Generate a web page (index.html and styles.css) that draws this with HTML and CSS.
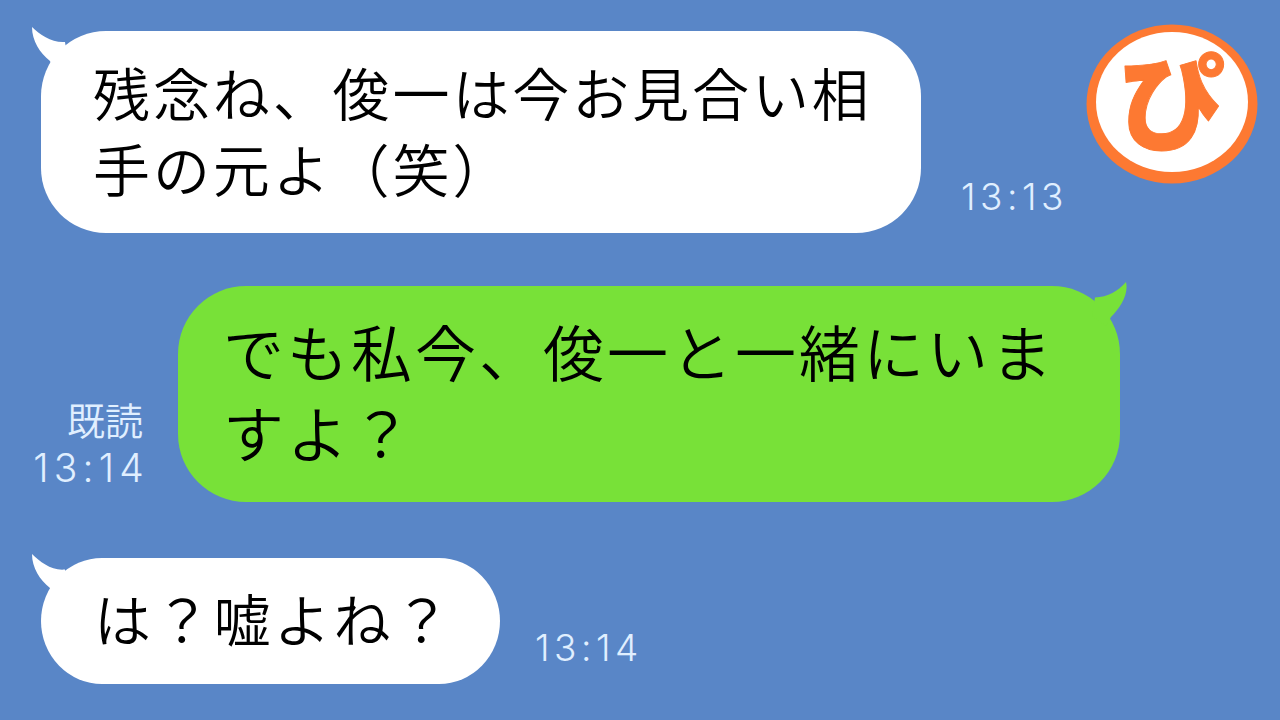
FILE: index.html
```
<!DOCTYPE html>
<html lang="ja">
<head>
    <meta charset="UTF-8">
    <meta name="viewport" content="width=device-width, initial-scale=1.0">
    <title>トーク</title>
    <link rel="stylesheet" href="styles.css">
</head>
<body>
    <div class="chat">
        <div class="message received first">
            <div class="bubble">
                <svg class="tail" viewBox="0 0 36 46"><path d="M0 0 C8 8 20 16 33 15 L36 34 L22 44 L18 34 C8 26 0 14 0 0 Z"/></svg>
                <p>残念ね、俊一は今お見合い相<br>手の元よ（笑）</p>
            </div>
            <span class="time">13:13</span>
        </div>

        <div class="message sent">
            <div class="status">
                <span class="read">既読</span>
                <span class="time">13:14</span>
            </div>
            <div class="bubble">
                <svg class="tail" viewBox="0 0 36 46"><path d="M34 0 C26 9 16 15 3 15.500 L0 34 L14 44 L19 35 C28 26 37 12 34 0 Z"/></svg>
                <p>でも私今、俊一と一緒にいま<br>すよ？</p>
            </div>
        </div>

        <div class="message received last">
            <div class="bubble">
                <svg class="tail" viewBox="0 0 36 46"><path d="M0 0 C8 8 20 17 33 15.500 L36 34 L22 44 L18 34 C8 26 0 14 0 0 Z"/></svg>
                <p>は？嘘よね？</p>
            </div>
            <span class="time">13:14</span>
        </div>
    </div>

    <svg class="logo" viewBox="0 0 172 160">
        <ellipse class="logo-ring" cx="86" cy="80" rx="85.500" ry="79.500"/>
        <ellipse class="logo-face" cx="86" cy="78" rx="76" ry="70"/>
        <text class="logo-text" x="86" y="117" text-anchor="middle">ぴ</text>
    </svg>
</body>
</html>
```
FILE: styles.css
```
* {
    margin: 0;
    padding: 0;
    box-sizing: border-box;
}
body {
    width: 1280px;
    height: 720px;
    background: #5986c7;
    font-family: 'Noto Sans CJK JP', sans-serif;
    overflow: hidden;
}
.chat {
    padding: 31px 0 0;
}
.message {
    display: flex;
    align-items: flex-end;
}
.received {
    padding-left: 41px;
}
.sent {
    padding-left: 30px;
    margin: 53px 0 56px;
}
.bubble {
    position: relative;
    width: 880px;
    height: 202px;
    padding: 22px 0 0 52px;
    background: #fff;
    border-radius: 65px;
}
.bubble p {
    font-size: 57px;
    font-weight: 350;
    line-height: 76px;
    letter-spacing: 2.9px;
    color: #000;
    white-space: nowrap;
}
.sent .bubble {
    width: 942px;
    height: 216px;
    padding: 24px 0 0 45px;
    background: #78e138;
    border-radius: 68px;
}
.sent .bubble p {
    font-size: 61px;
    line-height: 81px;
    letter-spacing: 3px;
}
.last .bubble {
    width: 459px;
    height: 126px;
    padding: 21px 0 0 53px;
    border-radius: 61px / 63px;
}
/* bubble tails */
.tail {
    position: absolute;
    top: -4px;
    left: -9px;
    width: 36px;
    height: 46px;
    fill: #fff;
}
.sent .tail {
    left: auto;
    right: -8px;
    fill: #78e138;
}
.time {
    font-family: 'Inter', sans-serif;
    font-size: 37px;
    font-weight: 300;
    line-height: 40px;
    letter-spacing: 4.5px;
    color: #e0efff;
    white-space: nowrap;
}
.received .time {
    margin-left: 40px;
    margin-bottom: 16px;
}
.last .time {
    margin-left: 35px;
}
.status {
    display: flex;
    flex-direction: column;
    align-items: flex-end;
    width: 113px;
    margin-right: 35px;
    margin-bottom: 14px;
}
.status .time {
    font-size: 39px;
    letter-spacing: 5.2px;
    margin-right: -6px;
}
.read {
    font-size: 38px;
    font-weight: 350;
    line-height: 48px;
    margin-bottom: 5px;
    color: #e0efff;
}
.logo {
    position: absolute;
    top: 24px;
    left: 1086px;
    width: 172px;
    height: 160px;
    overflow: visible;
}
.logo-ring {
    fill: #fd7932;
}
.logo-face {
    fill: #fff;
}
.logo-text {
    font-size: 105px;
    font-weight: 900;
    fill: #fd7932;
    stroke: #fd7932;
    stroke-width: 1px;
    stroke-linejoin: round;
}
```
